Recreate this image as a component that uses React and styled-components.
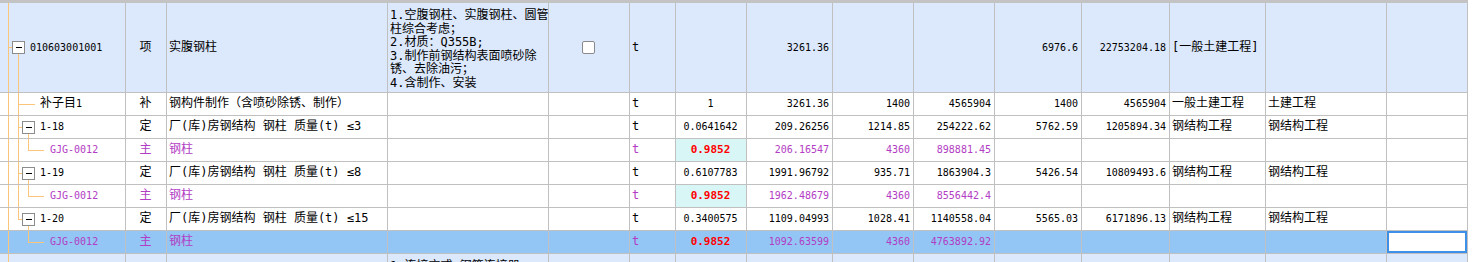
import React from 'react';
import styled, { createGlobalStyle } from 'styled-components';

const COLS = [126, 41, 221, 161, 81, 46, 71, 86, 81, 81, 87, 88, 96, 121, 81];

const LINE = '#c0c0c0';
const BILL_BG = '#dce8fb';
const SEL_BG = '#93c6f4';
const PURPLE = '#b23cc4';
const TREE = '#fcc67a';

const GlobalStyle = createGlobalStyle`
  html, body {
    margin: 0;
    padding: 0;
    background: #fff;
    overflow: hidden;
  }
  body {
    font-family: "DejaVu Sans Mono", "Noto Sans CJK SC", monospace;
    font-size: 12px;
    color: #000;
  }
`;

const Sheet = styled.div`
  width: 1468px;
`;

const TopBar = styled.div`
  height: 3px;
  background: #c3c3c3;
`;

const Row = styled.div`
  display: grid;
  grid-template-columns: ${COLS.map((c) => c + 'px').join(' ')};
  height: ${(p) => p.$h}px;
  background: ${(p) => p.$bg || '#fff'};
  color: ${(p) => p.$color || '#000'};
`;

const Cell = styled.div`
  box-sizing: border-box;
  border-right: 1px solid ${LINE};
  border-bottom: 1px solid ${LINE};
  display: flex;
  align-items: ${(p) => (p.$top ? 'flex-start' : 'center')};
  justify-content: ${(p) =>
    p.$align === 'right' ? 'flex-end' : p.$align === 'center' ? 'center' : 'flex-start'};
  padding: ${(p) => (p.$top ? '6px 2px 0 2px' : '0 3px 0 2px')};
  overflow: hidden;
  white-space: nowrap;
  font-size: ${(p) => (p.$num ? '10px' : '12px')};
  line-height: 13.5px;
  background: ${(p) => p.$bg || 'transparent'};
  color: ${(p) => p.$color || 'inherit'};
  font-weight: ${(p) => (p.$bold ? 'bold' : 'normal')};
`;

const CodeCell = styled(Cell)`
  align-items: stretch;
  padding: 0;
`;

const CodeText = styled.span`
  align-self: center;
  font-size: 10px;
`;

const Han = styled.span`
  font-size: 12px;
`;

const Feature = styled.div`
  white-space: nowrap;
  line-height: 13.5px;
`;

const CheckBox = styled.span`
  width: 11px;
  height: 11px;
  border: 1px solid #8a8a8a;
  border-radius: 2px;
  background: #fff;
`;

const ActiveCell = styled(Cell)`
  background: #fff;
  box-shadow: inset 0 0 0 2px #3d8fe8;
`;

// tree connector drawing for the code column
function Tree({ w, h, v = [], hl, box }) {
  const mid = h / 2;
  const yOf = (k) =>
    k === 'top' ? 0 : k === 'mid' ? mid : k === 'boxb' ? mid + 6.5 : h;
  return (
    <svg width={w} height={h} style={{ flex: 'none' }}>
      {v.map(([x, a, b], i) => (
        <line key={i} x1={x + 0.5} x2={x + 0.5} y1={yOf(a)} y2={yOf(b)} stroke={TREE} />
      ))}
      {hl && (
        <line x1={hl[0]} x2={hl[1]} y1={Math.floor(mid) + 0.5} y2={Math.floor(mid) + 0.5} stroke={TREE} />
      )}
      {box !== undefined && (
        <g>
          <rect
            x={box + 0.5}
            y={Math.floor(mid) - 5.5}
            width={12}
            height={12}
            fill="#fff"
            stroke="#8c8c8c"
          />
          <line
            x1={box + 4}
            x2={box + 10}
            y1={Math.floor(mid) + 0.5}
            y2={Math.floor(mid) + 0.5}
            stroke="#000"
          />
        </g>
      )}
    </svg>
  );
}

const trees = {
  sub: { w: 40, v: [[8, 'top', 'bottom'], [18, 'top', 'bottom']], hl: [18, 35] },
  quota: {
    w: 40,
    v: [[8, 'top', 'bottom'], [18, 'top', 'bottom'], [28, 'boxb', 'bottom']],
    hl: [18, 22],
    box: 22,
  },
  main: { w: 50, v: [[8, 'top', 'bottom'], [18, 'top', 'bottom'], [28, 'top', 'mid']], hl: [28, 44] },
  quotaLast: {
    w: 40,
    v: [[8, 'top', 'bottom'], [18, 'top', 'mid'], [28, 'boxb', 'bottom']],
    hl: [18, 22],
    box: 22,
  },
  mainLast: { w: 50, v: [[8, 'top', 'bottom'], [28, 'top', 'mid']], hl: [28, 44] },
};

const rows = [
  {
    tree: 'sub',
    code: <><Han>补子目</Han>1</>,
    type: '补',
    name: '钢构件制作（含喷砂除锈、制作）',
    qty: '1',
    vals: ['3261.36', '1400', '4565904', '1400', '4565904'],
    spec: '一般土建工程',
    major: '土建工程',
  },
  {
    tree: 'quota',
    code: '1-18',
    type: '定',
    name: '厂(库)房钢结构 钢柱 质量(t) ≤3',
    qty: '0.0641642',
    vals: ['209.26256', '1214.85', '254222.62', '5762.59', '1205894.34'],
    spec: '钢结构工程',
    major: '钢结构工程',
  },
  {
    tree: 'main',
    main: true,
    code: 'GJG-0012',
    type: '主',
    name: '钢柱',
    qty: '0.9852',
    vals: ['206.16547', '4360', '898881.45', '', ''],
  },
  {
    tree: 'quota',
    code: '1-19',
    type: '定',
    name: '厂(库)房钢结构 钢柱 质量(t) ≤8',
    qty: '0.6107783',
    vals: ['1991.96792', '935.71', '1863904.3', '5426.54', '10809493.6'],
    spec: '钢结构工程',
    major: '钢结构工程',
  },
  {
    tree: 'main',
    main: true,
    code: 'GJG-0012',
    type: '主',
    name: '钢柱',
    qty: '0.9852',
    vals: ['1962.48679', '4360', '8556442.4', '', ''],
  },
  {
    tree: 'quotaLast',
    code: '1-20',
    type: '定',
    name: '厂(库)房钢结构 钢柱 质量(t) ≤15',
    qty: '0.3400575',
    vals: ['1109.04993', '1028.41', '1140558.04', '5565.03', '6171896.13'],
    spec: '钢结构工程',
    major: '钢结构工程',
  },
  {
    tree: 'mainLast',
    main: true,
    selected: true,
    code: 'GJG-0012',
    type: '主',
    name: '钢柱',
    qty: '0.9852',
    vals: ['1092.63599', '4360', '4763892.92', '', ''],
  },
];

function ItemRow({ r }) {
  const t = trees[r.tree];
  const color = r.main ? PURPLE : '#000';
  return (
    <Row $h={23} $bg={r.selected ? SEL_BG : '#fff'} $color={color}>
      <CodeCell>
        <Tree h={22} {...t} />
        <CodeText>{r.code}</CodeText>
      </CodeCell>
      <Cell $align="center">{r.type}</Cell>
      <Cell>{r.name}</Cell>
      <Cell />
      <Cell />
      <Cell>t</Cell>
      {r.main ? (
        <Cell $align="center" $num $bold $color="#ff0000" $bg={r.selected ? null : '#d9f6f6'} style={{ fontSize: 11 }}>
          {r.qty}
        </Cell>
      ) : (
        <Cell $align="center" $num>{r.qty}</Cell>
      )}
      {r.vals.map((v, i) => (
        <Cell key={i} $align="right" $num>{v}</Cell>
      ))}
      <Cell $color="#000">{r.spec}</Cell>
      <Cell $color="#000">{r.major}</Cell>
      {r.selected ? <ActiveCell /> : <Cell />}
    </Row>
  );
}

export default function App() {
  return (
    <>
      <GlobalStyle />
      <Sheet>
        <TopBar />
        <Row $h={90} $bg={BILL_BG}>
          <CodeCell>
            <Tree
              w={30}
              h={89}
              v={[[8, 'top', 'bottom'], [18, 'boxb', 'bottom']]}
              hl={[8, 12]}
              box={12}
            />
            <CodeText>010603001001</CodeText>
          </CodeCell>
          <Cell $align="center">项</Cell>
          <Cell>实腹钢柱</Cell>
          <Cell $top>
            <Feature>
              1.空腹钢柱、实腹钢柱、圆管<br />
              柱综合考虑；<br />
              2.材质：Q355B;<br />
              3.制作前钢结构表面喷砂除<br />
              锈、去除油污；<br />
              4.含制作、安装
            </Feature>
          </Cell>
          <Cell $align="center">
            <CheckBox />
          </Cell>
          <Cell>t</Cell>
          <Cell $num />
          <Cell $align="right" $num>3261.36</Cell>
          <Cell $num />
          <Cell $num />
          <Cell $align="right" $num>6976.6</Cell>
          <Cell $align="right" $num>22753204.18</Cell>
          <Cell>[一般土建工程]</Cell>
          <Cell />
          <Cell />
        </Row>
        {rows.map((r, i) => (
          <ItemRow key={i} r={r} />
        ))}
        <Row $h={90} $bg={BILL_BG}>
          <CodeCell>
            <Tree w={30} h={89} v={[[8, 'top', 'bottom']]} />
          </CodeCell>
          <Cell />
          <Cell />
          <Cell $top>
            <Feature>1.连接方式:钢筋连接器</Feature>
          </Cell>
          {COLS.slice(4).map((_, i) => (
            <Cell key={i} />
          ))}
        </Row>
      </Sheet>
    </>
  );
}
